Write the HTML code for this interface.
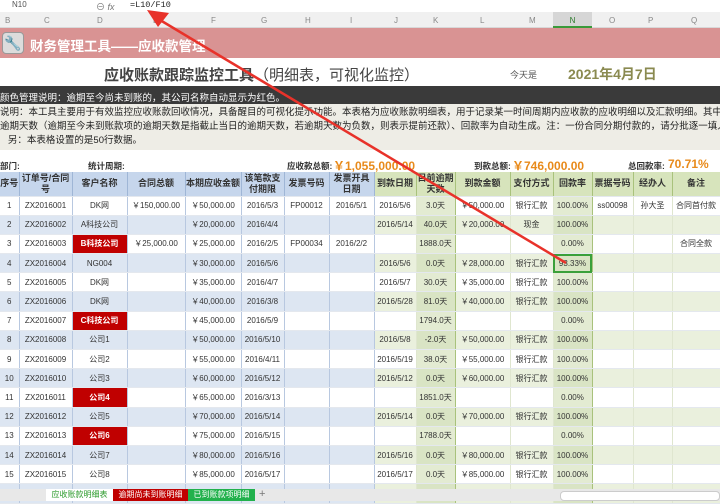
<!DOCTYPE html>
<html><head><meta charset="utf-8"><style>
*{margin:0;padding:0;box-sizing:border-box}
body{width:720px;height:501px;overflow:hidden;position:relative;background:#fff;font-family:"Liberation Sans","Noto Sans CJK SC",sans-serif;color:#333}
.abs{position:absolute}
table{border-collapse:collapse;table-layout:fixed;position:absolute;left:0;top:172px;width:720px}
td{font-size:8px;text-align:center;height:19.2px;border-right:1px solid #b8c8e0;border-bottom:1px solid #e4e8ee;white-space:nowrap;overflow:hidden;color:#333}
tr.h td{height:24px;font-size:9px;font-weight:bold;background:#c6d6ec;line-height:11px;white-space:normal;border-right:1px solid #9fb6d6;color:#333}
tr.h td.n{white-space:nowrap}
tr.h td.g{background:#d7e4bc;border-right:1px solid #a9c27c}
tr.e td{background:#dde6f2}
tr.e td.r{background:#eaf0dd}
tr.o td.r{background:#fff}
td.r{border-right:1px solid #dfe6cf}
tr td.k{background:#e3ebd2!important;border-left:1px solid #a9c27c;border-right:1px solid #a9c27c}
tr.e td.k{background:#d9e4c4!important}
td.red{background:#c00000!important;color:#fff;font-weight:bold}
</style></head><body>
<div class="abs" style="left:0;top:0;width:720px;height:12px;background:#fff"></div>
<div class="abs" style="left:2px;top:0;width:62px;height:11px;font-size:8px;color:#555;padding-left:10px">N10</div>
<div class="abs" style="left:96px;top:0;font-size:9px;color:#777">⊖ <i>fx</i></div>
<div class="abs" style="left:130px;top:0;font-size:8.5px;font-family:'Liberation Mono',monospace;color:#222">=L10/F10</div>
<div class="abs" style="left:0;top:12px;width:720px;height:16px;background:#f0f0f0;border-bottom:1px solid #d8d8d8;font-size:8px;color:#888">
<span class="abs" style="left:5px;top:4px">B</span><span class="abs" style="left:44px;top:4px">C</span><span class="abs" style="left:97px;top:4px">D</span><span class="abs" style="left:153px;top:4px">E</span><span class="abs" style="left:211px;top:4px">F</span><span class="abs" style="left:261px;top:4px">G</span><span class="abs" style="left:305px;top:4px">H</span><span class="abs" style="left:350px;top:4px">I</span><span class="abs" style="left:394px;top:4px">J</span><span class="abs" style="left:433px;top:4px">K</span><span class="abs" style="left:480px;top:4px">L</span><span class="abs" style="left:529px;top:4px">M</span>
<span class="abs" style="left:553px;top:0;width:39px;height:16px;background:#d6d6d6;border-bottom:2px solid #3a9a3a;text-align:center;padding-top:4px;color:#2a7a2a">N</span>
<span class="abs" style="left:609px;top:4px">O</span><span class="abs" style="left:648px;top:4px">P</span><span class="abs" style="left:691px;top:4px">Q</span></div>
<div class="abs" style="left:0;top:28px;width:720px;height:30px;background:#d99393"></div>
<div class="abs" style="left:2px;top:32px;width:22px;height:22px;background:#dcdcdc;border-radius:4px;border:1px solid #999;font-size:14px;text-align:center;line-height:20px;color:#444">🔧</div>
<div class="abs" style="left:30px;top:35px;font-size:13.5px;color:#fff;font-weight:bold">财务管理工具——应收款管理</div>
<div class="abs" style="left:104px;top:64px;font-size:15px;color:#444"><b>应收账款跟踪监控工具</b>（明细表，可视化监控）</div>
<div class="abs" style="left:510px;top:68px;font-size:9px;color:#555">今天是</div>
<div class="abs" style="left:568px;top:64px;font-size:14px;font-weight:bold;color:#8a8a50">2021年4月7日</div>
<div class="abs" style="left:0;top:86px;width:720px;height:18px;background:#3a3a3a;color:#fff;font-size:9.5px;padding:4px 0 0 0">颜色管理说明：逾期至今尚未到账的，其公司名称自动显示为红色。</div>
<div class="abs" style="left:0;top:104px;width:720px;height:46px;background:#eeede6;color:#222;font-size:9.5px;line-height:14px;padding-top:2px;white-space:nowrap;overflow:hidden">说明：本工具主要用于有效监控应收账款回收情况，具备醒目的可视化提示功能。本表格为应收账款明细表，用于记录某一时间周期内应收款的应收明细以及汇款明细。其中的<br>逾期天数（逾期至今未到账款项的逾期天数是指截止当日的逾期天数，若逾期天数为负数，则表示提前还款）、回款率为自动生成。注：一份合同分期付款的，请分批逐一填入<br>&nbsp;&nbsp;&nbsp;另：本表格设置的是50行数据。</div>
<div class="abs" style="left:0;top:160px;font-size:8.5px;font-weight:bold;color:#333">部门:</div>
<div class="abs" style="left:88px;top:160px;font-size:8.5px;font-weight:bold;color:#333">统计周期:</div>
<div class="abs" style="left:287px;top:160px;font-size:8.5px;font-weight:bold;color:#333">应收款总额:</div>
<div class="abs" style="left:333px;top:157px;font-size:12px;font-weight:bold;color:#e88a1a">￥1,055,000.00</div>
<div class="abs" style="left:474px;top:160px;font-size:8.5px;font-weight:bold;color:#333">到款总额:</div>
<div class="abs" style="left:512px;top:157px;font-size:12px;font-weight:bold;color:#e88a1a">￥746,000.00</div>
<div class="abs" style="left:628px;top:160px;font-size:8.5px;font-weight:bold;color:#333">总回款率:</div>
<div class="abs" style="left:668px;top:157px;font-size:12px;font-weight:bold;color:#e88a1a">70.71%</div>
<table>
<colgroup><col style="width:19px"><col style="width:53px"><col style="width:55px"><col style="width:58px"><col style="width:56px"><col style="width:43px"><col style="width:45px"><col style="width:45px"><col style="width:42px"><col style="width:39px"><col style="width:55px"><col style="width:43px"><col style="width:39px"><col style="width:41px"><col style="width:39px"><col style="width:48px"></colgroup>
<tr class="h"><td class="n">序号</td><td>订单号/合同号</td><td>客户名称</td><td>合同总额</td><td class="n">本期应收金额</td><td>该笔款支付期限</td><td>发票号码</td><td>发票开具日期</td><td class="g n">到款日期</td><td class="g">目前逾期天数</td><td class="g">到款金额</td><td class="g">支付方式</td><td class="g">回款率</td><td class="g n">票据号码</td><td class="g">经办人</td><td class="g">备注</td></tr>
<tr class="o"><td>1</td><td>ZX2016001</td><td>DK网</td><td>￥150,000.00</td><td>￥50,000.00</td><td>2016/5/3</td><td>FP00012</td><td>2016/5/1</td><td class="r">2016/5/6</td><td class="r k">3.0天</td><td class="r">￥50,000.00</td><td class="r">银行汇款</td><td class="r k">100.00%</td><td class="r">ss00098</td><td class="r">孙大圣</td><td class="r">合同首付款</td></tr>
<tr class="e"><td>2</td><td>ZX2016002</td><td>A科技公司</td><td></td><td>￥20,000.00</td><td>2016/4/4</td><td></td><td></td><td class="r">2016/5/14</td><td class="r k">40.0天</td><td class="r">￥20,000.00</td><td class="r">现金</td><td class="r k">100.00%</td><td class="r"></td><td class="r"></td><td class="r"></td></tr>
<tr class="o"><td>3</td><td>ZX2016003</td><td class="red">B科技公司</td><td>￥25,000.00</td><td>￥25,000.00</td><td>2016/2/5</td><td>FP00034</td><td>2016/2/2</td><td class="r"></td><td class="r k">1888.0天</td><td class="r"></td><td class="r"></td><td class="r k">0.00%</td><td class="r"></td><td class="r"></td><td class="r">合同全款</td></tr>
<tr class="e"><td>4</td><td>ZX2016004</td><td>NG004</td><td></td><td>￥30,000.00</td><td>2016/5/6</td><td></td><td></td><td class="r">2016/5/6</td><td class="r k">0.0天</td><td class="r">￥28,000.00</td><td class="r">银行汇款</td><td class="r k" style="outline:2px solid #3aa03a;outline-offset:-2px">93.33%</td><td class="r"></td><td class="r"></td><td class="r"></td></tr>
<tr class="o"><td>5</td><td>ZX2016005</td><td>DK网</td><td></td><td>￥35,000.00</td><td>2016/4/7</td><td></td><td></td><td class="r">2016/5/7</td><td class="r k">30.0天</td><td class="r">￥35,000.00</td><td class="r">银行汇款</td><td class="r k">100.00%</td><td class="r"></td><td class="r"></td><td class="r"></td></tr>
<tr class="e"><td>6</td><td>ZX2016006</td><td>DK网</td><td></td><td>￥40,000.00</td><td>2016/3/8</td><td></td><td></td><td class="r">2016/5/28</td><td class="r k">81.0天</td><td class="r">￥40,000.00</td><td class="r">银行汇款</td><td class="r k">100.00%</td><td class="r"></td><td class="r"></td><td class="r"></td></tr>
<tr class="o"><td>7</td><td>ZX2016007</td><td class="red">C科技公司</td><td></td><td>￥45,000.00</td><td>2016/5/9</td><td></td><td></td><td class="r"></td><td class="r k">1794.0天</td><td class="r"></td><td class="r"></td><td class="r k">0.00%</td><td class="r"></td><td class="r"></td><td class="r"></td></tr>
<tr class="e"><td>8</td><td>ZX2016008</td><td>公司1</td><td></td><td>￥50,000.00</td><td>2016/5/10</td><td></td><td></td><td class="r">2016/5/8</td><td class="r k">-2.0天</td><td class="r">￥50,000.00</td><td class="r">银行汇款</td><td class="r k">100.00%</td><td class="r"></td><td class="r"></td><td class="r"></td></tr>
<tr class="o"><td>9</td><td>ZX2016009</td><td>公司2</td><td></td><td>￥55,000.00</td><td>2016/4/11</td><td></td><td></td><td class="r">2016/5/19</td><td class="r k">38.0天</td><td class="r">￥55,000.00</td><td class="r">银行汇款</td><td class="r k">100.00%</td><td class="r"></td><td class="r"></td><td class="r"></td></tr>
<tr class="e"><td>10</td><td>ZX2016010</td><td>公司3</td><td></td><td>￥60,000.00</td><td>2016/5/12</td><td></td><td></td><td class="r">2016/5/12</td><td class="r k">0.0天</td><td class="r">￥60,000.00</td><td class="r">银行汇款</td><td class="r k">100.00%</td><td class="r"></td><td class="r"></td><td class="r"></td></tr>
<tr class="o"><td>11</td><td>ZX2016011</td><td class="red">公司4</td><td></td><td>￥65,000.00</td><td>2016/3/13</td><td></td><td></td><td class="r"></td><td class="r k">1851.0天</td><td class="r"></td><td class="r"></td><td class="r k">0.00%</td><td class="r"></td><td class="r"></td><td class="r"></td></tr>
<tr class="e"><td>12</td><td>ZX2016012</td><td>公司5</td><td></td><td>￥70,000.00</td><td>2016/5/14</td><td></td><td></td><td class="r">2016/5/14</td><td class="r k">0.0天</td><td class="r">￥70,000.00</td><td class="r">银行汇款</td><td class="r k">100.00%</td><td class="r"></td><td class="r"></td><td class="r"></td></tr>
<tr class="o"><td>13</td><td>ZX2016013</td><td class="red">公司6</td><td></td><td>￥75,000.00</td><td>2016/5/15</td><td></td><td></td><td class="r"></td><td class="r k">1788.0天</td><td class="r"></td><td class="r"></td><td class="r k">0.00%</td><td class="r"></td><td class="r"></td><td class="r"></td></tr>
<tr class="e"><td>14</td><td>ZX2016014</td><td>公司7</td><td></td><td>￥80,000.00</td><td>2016/5/16</td><td></td><td></td><td class="r">2016/5/16</td><td class="r k">0.0天</td><td class="r">￥80,000.00</td><td class="r">银行汇款</td><td class="r k">100.00%</td><td class="r"></td><td class="r"></td><td class="r"></td></tr>
<tr class="o"><td>15</td><td>ZX2016015</td><td>公司8</td><td></td><td>￥85,000.00</td><td>2016/5/17</td><td></td><td></td><td class="r">2016/5/17</td><td class="r k">0.0天</td><td class="r">￥85,000.00</td><td class="r">银行汇款</td><td class="r k">100.00%</td><td class="r"></td><td class="r"></td><td class="r"></td></tr>
<tr class="e"><td></td><td></td><td></td><td></td><td></td><td></td><td></td><td></td><td class="r"></td><td class="r k"></td><td class="r"></td><td class="r"></td><td class="r k"></td><td class="r"></td><td class="r"></td><td class="r"></td></tr>
</table>
<div class="abs" style="left:0;top:489px;width:720px;height:12px;background:#e8e8e8;font-size:8px">
<span class="abs" style="left:46px;top:0;width:67px;height:12px;background:#fff;color:#2a9a2a;text-align:center;line-height:12px">应收账款明细表</span>
<span class="abs" style="left:113px;top:0;width:75px;height:12px;background:#c00000;color:#fff;text-align:center;line-height:12px">逾期尚未到账明细</span>
<span class="abs" style="left:188px;top:0;width:67px;height:12px;background:#22b14c;color:#fff;text-align:center;line-height:12px">已到账款项明细</span>
<span class="abs" style="left:259px;top:-1px;color:#777;font-size:11px">+</span>
<span class="abs" style="left:560px;top:2px;width:160px;height:10px;background:#fff;border:1px solid #ccc;border-radius:4px"></span>
</div>
<svg class="abs" style="left:0;top:0" width="720" height="501"><line x1="566" y1="263" x2="160" y2="20" stroke="#e8322a" stroke-width="2.5"/><polygon points="147,10 169,13 158,27" fill="#e8322a"/></svg>
</body></html>
